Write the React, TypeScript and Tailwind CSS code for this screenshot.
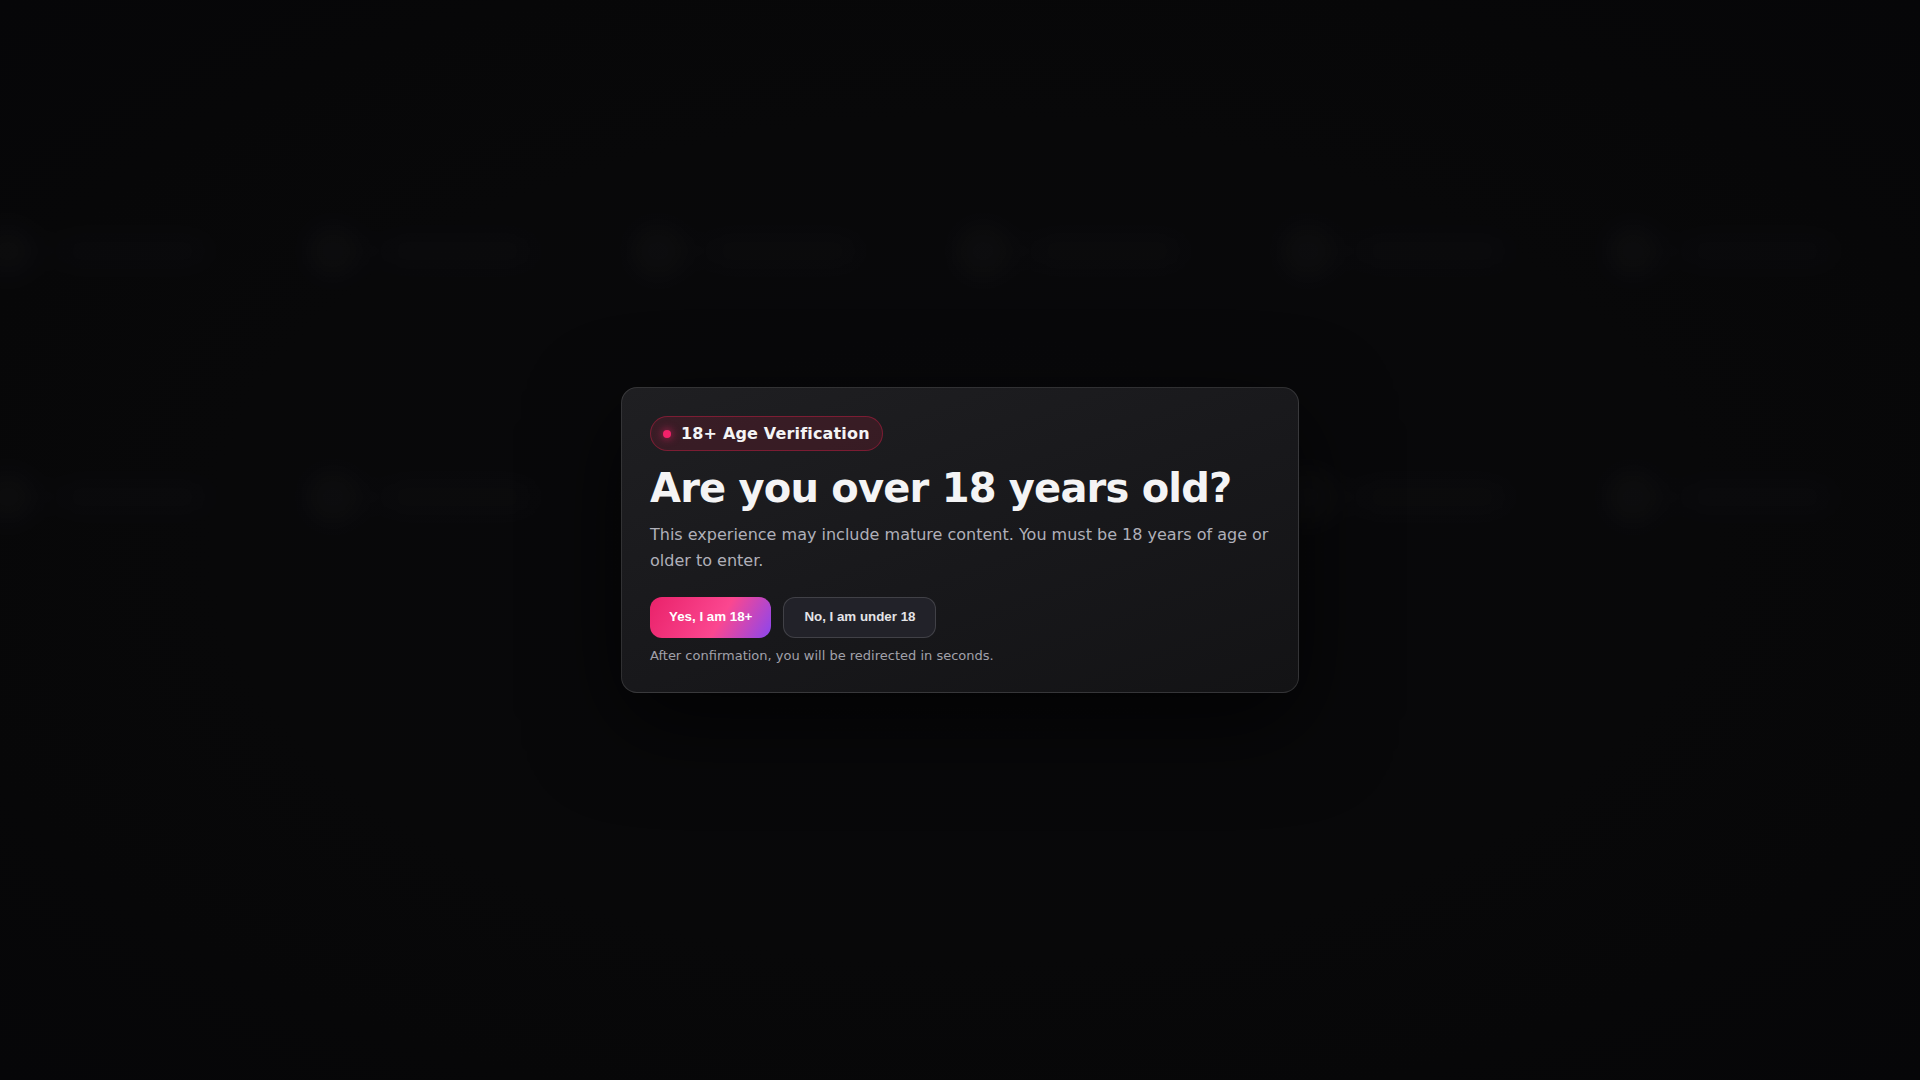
import React from 'react'

const ghostRows = [0, 1]
const ghostCols = [0, 1, 2, 3, 4, 5]

function GhostItem() {
  return (
    <div className="flex w-[233px] shrink-0 items-center gap-4">
      <div className="h-[54px] w-[54px] shrink-0 rounded-full bg-white/[0.035]" />
      <div className="h-[30px] flex-1 rounded-full bg-white/[0.025]" />
    </div>
  )
}

export default function App() {
  return (
    <div className="relative h-screen w-full overflow-hidden bg-[radial-gradient(ellipse_at_center,#0c0c0e_0%,#0a0a0c_55%,#08080a_100%)] font-['DejaVu_Sans',sans-serif]">
      {/* blurred page behind the gate */}
      <div aria-hidden className="absolute inset-0 flex flex-col gap-[192px] pt-[224px] blur-lg">
        {ghostRows.map((r) => (
          <div key={r} className="-ml-[19px] flex gap-[92px]">
            {ghostCols.map((c) => (
              <GhostItem key={c} />
            ))}
          </div>
        ))}
      </div>

      <div className="absolute inset-0 flex items-center justify-center bg-black/20">
        <div className="w-[678px] rounded-2xl border border-white/[0.12] bg-[linear-gradient(160deg,#1f1f22_0%,#18181b_55%,#131315_100%)] px-7 pt-7 pb-[26px] shadow-[0_30px_90px_rgba(0,0,0,0.7)]">
          <div className="inline-flex h-[35px] items-center gap-[10px] rounded-full border border-[#e11d48]/40 bg-[#e11d48]/[0.14] px-3">
            <span className="h-2 w-2 rounded-full bg-[#f2226a] shadow-[0_0_8px_rgba(242,34,106,0.9)]" />
            <span className="text-base font-bold tracking-[0.01em] text-[#f4f4f5]">18+ Age Verification</span>
          </div>

          <h1 className="mt-[14px] text-[40px] leading-[1.15] font-bold tracking-[-0.02em] text-[#f4f4f5]">
            Are you over 18 years old?
          </h1>

          <p className="mt-[11px] text-base leading-[1.6] text-[#b0b0b9]">
            This experience may include mature content. You must be 18 years of age or older to enter.
          </p>

          <div className="mt-[23px] flex gap-3">
            <button className="h-[41px] rounded-xl bg-[linear-gradient(120deg,#e9226a_0%,#fb4790_58%,#8a46ef_100%)] px-[19px] font-['Liberation_Sans',Arial,sans-serif] text-[13.333px] font-bold text-white">
              Yes, I am 18+
            </button>
            <button className="h-[41px] rounded-xl border border-white/[0.14] bg-[#222229] px-[20px] font-['Liberation_Sans',Arial,sans-serif] text-[13.333px] font-bold text-[#e4e4e7]">
              No, I am under 18
            </button>
          </div>

          <p className="mt-[8px] text-[13px] leading-5 text-[#a1a1aa]">
            After confirmation, you will be redirected in seconds.
          </p>
        </div>
      </div>
    </div>
  )
}
